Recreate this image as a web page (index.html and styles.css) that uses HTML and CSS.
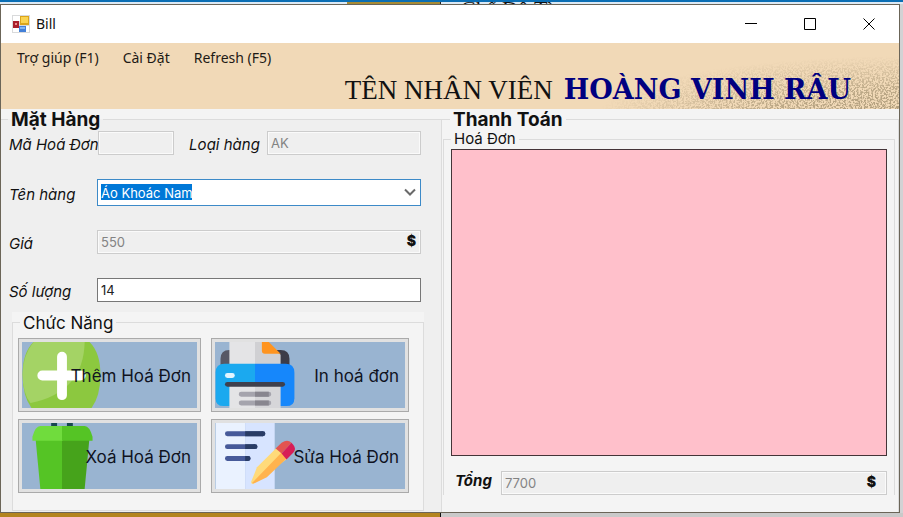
FILE: index.html
```html
<!DOCTYPE html>
<html lang="vi">
<head>
<meta charset="utf-8">
<title>Bill</title>
<link rel="stylesheet" href="styles.css">
</head>
<body>
<div class="backdrop-top"><span class="gold"></span><span class="behind-text">Chế Độ Tì</span></div>
<main class="window">
  <header class="titlebar">
    <svg class="app-icon" viewBox="0 0 18 18" aria-hidden="true">
      <rect width="18" height="18" fill="#d9dadb"/><path d="M1 1h7v5H1zM1 13h6v4H1zM14 11h3v6h-3z" fill="#fff"/>
      <rect x="8" y="1" width="9" height="9" fill="#dba51b"/><rect x="9" y="2" width="7" height="6" fill="#fad451"/>
      <rect x="1" y="6" width="6" height="7" fill="#a91f2b"/><rect x="3" y="8" width="2" height="2" fill="#e88a8a"/>
      <rect x="7" y="11" width="7" height="6" fill="#4380d8"/><rect x="8" y="12" width="5" height="2" fill="#80b4f4"/>
    </svg>
    <h1>Bill</h1>
    <div class="window-controls">
      <button aria-label="Minimize"><svg viewBox="0 0 12 12"><path d="M0 5.500h12"/></svg></button>
      <button aria-label="Maximize"><svg viewBox="0 0 12 12"><path d="M.5.5h11v11H.5z"/></svg></button>
      <button aria-label="Close"><svg viewBox="0 0 12 12"><path d="M.5.5l11 11M11.500.5l-11 11"/></svg></button>
    </div>
  </header>

  <div class="banner">
    <svg class="grain" aria-hidden="true">
      <defs>
        <filter id="noise" x="0" y="0" width="100%" height="100%">
          <feTurbulence type="fractalNoise" baseFrequency="0.55" numOctaves="2" seed="4"/>
          <feColorMatrix values="0 0 0 0 .36  0 0 0 0 .28  0 0 0 0 .16  6 0 0 0 -2.600"/>
        </filter>
        <radialGradient id="fade" cx="1" cy="1.150" r="1">
          <stop offset="0" stop-color="#fff" stop-opacity=".9"/><stop offset=".45" stop-color="#fff" stop-opacity=".65"/><stop offset=".95" stop-color="#fff" stop-opacity="0"/>
        </radialGradient>
        <mask id="grain-mask"><rect width="100%" height="100%" fill="url(#fade)"/></mask>
      </defs>
      <g mask="url(#grain-mask)"><rect width="100%" height="100%" filter="url(#noise)"/></g>
    </svg>
    <nav class="menu"><a href="#">Trợ giúp (F1)</a><a href="#">Cài Đặt</a><a href="#">Refresh (F5)</a></nav>
    <p class="staff"><span class="staff-label">TÊN NHÂN VIÊN</span><strong>HOÀNG VINH RÂU</strong></p>
  </div>

  <div class="panels">
    <fieldset class="group items">
      <legend>Mặt Hàng</legend>
      <div class="fields">
        <div class="row row-first">
          <label for="ma">Mã Hoá Đơn</label><input id="ma" class="box" disabled>
          <label class="kind" for="loai">Loại hàng</label><input id="loai" class="box" value="AK" disabled>
        </div>
        <div class="row">
          <label for="ten">Tên hàng</label>
          <div class="field">
            <select id="ten" class="box"><option>Áo Khoác Nam</option></select>
            <svg class="chevron" viewBox="0 0 12 8" aria-hidden="true"><path d="M1 1.500l5 5 5-5"/></svg>
          </div>
        </div>
        <div class="row">
          <label for="gia">Giá</label>
          <div class="field"><input id="gia" class="box" value="550" disabled><span class="unit">$</span></div>
        </div>
        <div class="row">
          <label for="so">Số lượng</label>
          <div class="field"><input id="so" class="box" value="14"></div>
        </div>
      </div>
      <div class="actions-panel">
        <fieldset class="group actions">
          <legend>Chức Năng</legend>
          <div class="action-grid">
            <button class="action">
              <svg viewBox="0 0 80 67" aria-hidden="true">
                <path d="M11 0h57q11 11 11 33T70 67H9Q0 55 0 33T11 0z" fill="#8cc83f"/>
                <path d="M11 0h52q-1 51-55 62Q0 52 0 33T11 0z" fill="#a4d365"/>
                <path d="M40 15v39M20 34h39" stroke="#fff" stroke-width="10" stroke-linecap="round"/>
              </svg><span>Thêm Hoá Đơn</span></button>
            <button class="action">
              <svg viewBox="0 0 80 67" aria-hidden="true">
                <path d="M5 25V17Q5 8 14 8h10v18z" fill="#575866"/><path d="M56 26V8h10q9 0 9 9v9z" fill="#3c3c48"/>
                <path d="M14 0h26v26H14z" fill="#e4e4e6"/><path d="M40 0h11l15 13v13H40z" fill="#d0d0d3"/>
                <path d="M47 0h7l12 12H50q-3 0-3-3z" fill="#ff941f"/>
                <path d="M40 22H9Q0 22 0 31v26q0 8 8 8h32z" fill="#1ba9ef"/><path d="M40 22h31q9 0 9 9v26q0 8-8 8H40z" fill="#1687fb"/>
                <path d="M14 44h26v23H14z" fill="#e4e4e6"/><path d="M40 44h26v23H40z" fill="#d6d6d9"/>
                <path d="M12 43h56" stroke="#3f404d" stroke-width="5" stroke-linecap="round"/>
                <path d="M12 34h5" stroke="#e2f5ff" stroke-width="5" stroke-linecap="round"/>
                <path d="M26 53h28M26 62h28" stroke="#a5a4ad" stroke-width="5" stroke-linecap="round"/>
                <path d="M40 53h14M40 62h14" stroke="#88868f" stroke-width="5"/>
              </svg><span>In hoá đơn</span></button>
            <button class="action">
              <svg viewBox="0 0 80 67" aria-hidden="true">
                <path d="M29 0h6v4h-6zM45 0h6v4h-6z" fill="#184850"/>
                <path d="M13 14h28v53H18z" fill="#55c425"/><path d="M40 14h28l-5 53H40z" fill="#46a31b"/>
                <path d="M18 3h23v15H10v-4q3-11 8-11z" fill="#70dc3d"/><path d="M40 3h23q5 0 8 11v4H40z" fill="#55c425"/>
              </svg><span>Xoá Hoá Đơn</span></button>
            <button class="action">
              <svg viewBox="0 0 80 67" aria-hidden="true">
                <path d="M0 0h30v67H0z" fill="#eaf2ff"/><path d="M30 0h30v67H30z" fill="#d7e4ff"/>
                <path d="M12 11h36M12 24h28M12 36h21" stroke="#475a99" stroke-width="5" stroke-linecap="round"/>
                <path d="M30 11h18M30 24h10M30 36h3" stroke="#293c65" stroke-width="5"/>
                <path d="M48 11h0M40 24h0M33 36h0" stroke="#293c65" stroke-width="5" stroke-linecap="round"/>
                <path d="M62 25L42 45 36 60q0 2 2 2l35-26z" fill="#ffda7a"/><path d="M67 30L37 61q1 1 3 0l12-6 20-19z" fill="#ffb34e"/>
                <path d="M61 26l6-6q6-4 10 0l-10 11z" fill="#e25450"/><path d="M67 31l10-11q6 6 2 10l-7 7z" fill="#d71d56"/>
              </svg><span>Sửa Hoá Đơn</span></button>
          </div>
        </fieldset>
      </div>
    </fieldset>

    <fieldset class="group payment">
      <legend>Thanh Toán</legend>
      <fieldset class="group invoice">
        <legend>Hoá Đơn</legend>
        <div class="invoice-list"></div>
        <div class="total">
          <label for="tong">Tổng</label>
          <div class="field"><input id="tong" class="box" value="7700" disabled><span class="unit">$</span></div>
        </div>
      </fieldset>
    </fieldset>
  </div>
</main>
<div class="backdrop-bottom"></div>
</body>
</html>
```
FILE: styles.css
```css
* { box-sizing: border-box; }
body {
  margin: 0;
  min-height: 100vh;
  display: flex;
  flex-direction: column;
  overflow: hidden;
  background: #d2d2d4;
  color: #111;
  font-family: Inter, "Liberation Sans", sans-serif;
  font-size: 16px;
}
.backdrop-top {
  height: 4px;
  display: flex;
  overflow: hidden;
  border-top: 2px solid #0a6eb4;
  background: #dce9f4;
}
.gold {
  width: 94px;
  margin-left: 347px;
  background: #a88b35;
  border-right: 1px solid #222;
}
.behind-text {
  padding-left: 20px;
  font: 22px/14px "Liberation Serif", serif;
}
.backdrop-bottom {
  height: 4px;
  background: linear-gradient(90deg, #b3841f 0 440px, #111 440px 441px, #c9c9c9 441px);
}
.window {
  flex: 1;
  display: flex;
  flex-direction: column;
  margin-right: 3px;
  border: 1px solid #6b6558;
  background: #f4f4f4;
}
.titlebar {
  height: 38px;
  display: flex;
  align-items: center;
  padding: 0 1px 0 11px;
  background: #fff;
}
.app-icon { width: 18px; height: 18px; }
h1 {
  flex: 1;
  margin: 0 0 0 6px;
  font: 14px/20px "Noto Sans", sans-serif;
}
.window-controls { display: flex; }
.window-controls button {
  width: 59px;
  height: 36px;
  padding: 0;
  border: 0;
  background: none;
}
.window-controls svg {
  display: block;
  width: 12px;
  height: 12px;
  margin: auto;
  fill: none;
  stroke: #000;
}
.banner {
  position: relative;
  height: 66px;
  background: #f1d9b7;
}
.grain {
  position: absolute;
  right: 0;
  bottom: 0;
  width: 320px;
  height: 66px;
}
.menu {
  position: relative;
  display: flex;
  gap: 24px;
  padding: 5px 16px 0;
}
.menu a {
  color: #1e1a16;
  font: 14px/20px "Noto Sans", sans-serif;
  text-decoration: none;
}
.staff {
  position: relative;
  display: flex;
  justify-content: flex-end;
  align-items: baseline;
  gap: 11px;
  margin: 0;
  padding: 2px 48px 0 0;
}
.staff-label { font: 27px/40px "Liberation Serif", serif; }
.staff strong {
  color: #000080;
  font: bold 27px/40px "DejaVu Serif", serif;
}
.panels {
  flex: 1;
  display: grid;
  grid-template-columns: 441fr 457fr;
}
.group {
  min-width: 0;
  margin: 0;
  padding: 0;
  border: 1px solid #dcdcdc;
}
.group legend {
  padding: 0 3px;
  line-height: 20px;
}
.items, .payment { border-width: 1px 1px 0 0; }
.items { background: #efefef; }
.items > legend, .payment > legend {
  margin-left: 7px;
  padding-top: 2px;
  font-size: 19px;
  font-weight: bold;
  line-height: 18px;
}
.payment > legend { margin-left: 8px; }
.fields {
  display: flex;
  flex-direction: column;
  gap: 24px;
  padding: 2px 20px 0 8px;
}
.row {
  display: grid;
  grid-template-columns: 88px 1fr;
  align-items: center;
}
.row-first { grid-template-columns: 89px 76px 93px 1fr; }
.row label, .total label {
  font-size: 15px;
  line-height: 20px;
  font-style: italic;
  white-space: nowrap;
}
.row label { padding-top: 4px; }
.row .kind { padding-left: 15px; }
.field { position: relative; }
.box {
  display: block;
  width: 100%;
  height: 24px;
  margin: 0;
  padding: 0 3px;
  border: 1px solid #777;
  border-radius: 0;
  background: #fff;
  color: #222;
  font: 13px/20px Inter, sans-serif;
}
.box:disabled {
  border-color: #ccc;
  background: #efefef;
  color: #838383;
  box-shadow: inset 0 0 0 1px #fafafa;
}
select.box {
  height: 27px;
  appearance: none;
  border-color: #3c8ac8;
  background: linear-gradient(#0078d7, #0078d7) 3px 4px / 91px 16px no-repeat #fff;
  color: #fff;
}
option { color: #222; }
.chevron {
  position: absolute;
  right: 5px;
  top: 9px;
  width: 12px;
  height: 8px;
  fill: none;
  stroke: #6a6a6a;
  stroke-width: 2;
}
.unit {
  position: absolute;
  right: 5px;
  top: 1px;
  font-size: 14px;
  font-weight: 900;
  line-height: 20px;
}
.actions-panel {
  margin: 10px 17px 0 11px;
  background: #f4f4f4;
}
.actions > legend {
  margin-left: 7px;
  padding-top: 2px;
  font-size: 17px;
  line-height: 18px;
}
.action-grid {
  display: grid;
  grid-template-columns: 183fr 198fr;
  gap: 7px 10px;
  padding: 6px 14px 17px 5px;
}
.action {
  position: relative;
  height: 74px;
  padding: 2px 9px 0;
  border: 1px solid #aaa;
  background: #99b4d1;
  box-shadow: inset 0 0 0 3px #e1e1e1;
  color: #10131f;
  font: 17px/20px Inter, sans-serif;
  text-align: right;
}
.action svg {
  position: absolute;
  left: 3px;
  top: 3px;
  width: 80px;
  height: 66px;
  fill: none;
}
.action span { position: relative; }
.invoice {
  margin: 0 3px 0 1px;
  border-width: 1px 1px 0;
}
.invoice > legend {
  margin-left: 7px;
  font-size: 15px;
}
.invoice-list {
  height: 307px;
  margin: 0 7px;
  border: 1px solid #443438;
  background: #ffc0cb;
}
.total {
  display: grid;
  grid-template-columns: 50px 1fr;
  padding: 15px 7px 0;
}
.total label {
  padding-left: 4px;
  font-weight: bold;
}
.total .unit { right: 11px; }
```
